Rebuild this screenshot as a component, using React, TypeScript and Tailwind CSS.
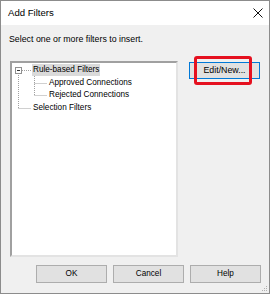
import React from "react";

const rows = [
  { label: "Rule-based Filters", indent: "pl-[20px]", selected: true },
  { label: "Approved Connections", indent: "pl-[36px]", selected: false },
  { label: "Rejected Connections", indent: "pl-[36px]", selected: false },
  { label: "Selection Filters", indent: "pl-[20px]", selected: false },
];

function TreeLines() {
  // connector lines + expand box, origin at tree inner corner (page 12,63)
  const dot = { stroke: "#a0a0a0", strokeWidth: 1, strokeDasharray: "1 1" };
  return (
    <svg className="absolute left-0 top-0" width="40" height="50" viewBox="0 0 40 50">
      <line x1="10" y1="7.5" x2="19" y2="7.5" {...dot} />
      <line x1="6.5" y1="10" x2="6.5" y2="45" {...dot} />
      <line x1="6.5" y1="45.5" x2="19" y2="45.5" {...dot} />
      <line x1="22.5" y1="13" x2="22.5" y2="33" {...dot} />
      <line x1="22.5" y1="20.5" x2="35" y2="20.5" {...dot} />
      <line x1="22.5" y1="32.5" x2="35" y2="32.5" {...dot} />
      <rect x="3.5" y="4.5" width="6" height="6" fill="#ffffff" stroke="#919191" />
      <line x1="5" y1="7.5" x2="8" y2="7.5" stroke="#333333" />
    </svg>
  );
}

function DialogButton({ children }: { children: React.ReactNode }) {
  return (
    <div className="w-[71px] h-[18px] border border-[#adadad] bg-[#e1e1e1] flex items-center justify-center text-[8.2px]">
      {children}
    </div>
  );
}

export default function App() {
  return (
    <div className="w-[270px] h-[294px] border border-[#8c8c8c] bg-[#f0f0f0] flex flex-col text-black font-['Liberation_Sans',Arial,sans-serif] relative">
      <div className="h-[24px] bg-white flex items-center justify-between pl-[7px] pr-[6px]">
        <span className="text-[9.6px]">Add Filters</span>
        <svg width="10" height="10" viewBox="0 0 10 10">
          <path d="M0.5 0.5 L9.5 9.5 M9.5 0.5 L0.5 9.5" stroke="#111111" strokeWidth="1" />
        </svg>
      </div>

      <div className="flex flex-col">
        <p className="mt-[9px] pl-[8px] text-[8.8px] leading-[11px]">Select one or more filters to insert.</p>

        <div className="mt-[16px] flex pl-[9px]">
          <div className="w-[168px] h-[196px] border-2 border-t-[#a0a0a0] border-l-[#a0a0a0] border-r-[#e3e3e3] border-b-[#e3e3e3] bg-white relative">
            <TreeLines />
            <div className="pt-[1px] text-[8.2px]">
              {rows.map((r) => (
                <div key={r.label} className={`h-[12.5px] flex items-center ${r.indent}`}>
                  <span className={r.selected ? "bg-[#dadada] px-[1px] leading-[12px]" : "px-[1px] leading-[12px]"}>{r.label}</span>
                </div>
              ))}
            </div>
          </div>

          <div className="ml-[11px] pt-[1px] relative">
            <div className="w-[71px] h-[17px] border border-[#0078d7] bg-[#e1e1e1] flex items-center justify-center text-[8.8px]">
              Edit/New...
            </div>
            <div className="absolute left-[5px] top-[-5px] w-[58px] h-[29px] border-[3px] border-[#e5101f] rounded-[3px]" />
          </div>
        </div>

        <div className="mt-[8px] flex justify-end gap-[6px] pr-[8px]">
          <DialogButton>OK</DialogButton>
          <DialogButton>Cancel</DialogButton>
          <DialogButton>Help</DialogButton>
        </div>
      </div>

      <svg className="absolute right-[1px] bottom-[1px]" width="7" height="7" viewBox="0 0 7 7">
        <rect x="5" y="1" width="1" height="1" fill="#b0b0b0" />
        <rect x="3" y="3" width="1" height="1" fill="#b0b0b0" />
        <rect x="5" y="3" width="1" height="1" fill="#b0b0b0" />
        <rect x="1" y="5" width="1" height="1" fill="#b0b0b0" />
        <rect x="3" y="5" width="1" height="1" fill="#b0b0b0" />
        <rect x="5" y="5" width="1" height="1" fill="#b0b0b0" />
      </svg>
    </div>
  );
}
